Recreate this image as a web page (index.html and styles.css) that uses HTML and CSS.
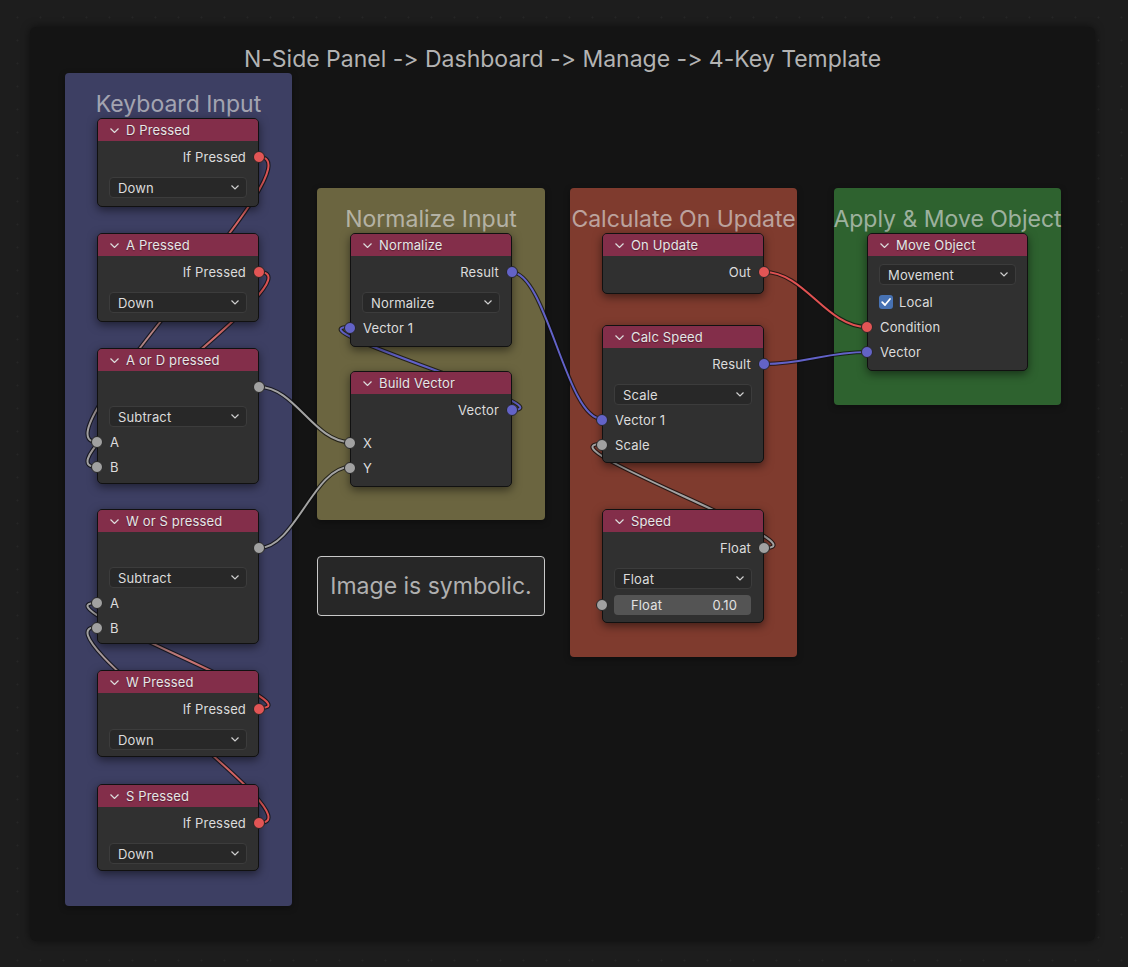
FILE: index.html
```html
<!DOCTYPE html>
<html>
<head>
<meta charset="utf-8">
<link rel="stylesheet" href="styles.css">
</head>
<body>
<div class="panel">
  <h1 class="title">N-Side Panel -&gt; Dashboard -&gt; Manage -&gt; 4-Key Template</h1>

  <div class="frame f-kb"><div class="frame-label">Keyboard Input</div></div>
  <div class="frame f-norm"><div class="frame-label">Normalize Input</div></div>
  <div class="frame f-calc"><div class="frame-label">Calculate On Update</div></div>
  <div class="frame f-apply"><div class="frame-label">Apply &amp; Move Object</div></div>

  <div class="note">Image is symbolic.</div>

  <svg class="links" width="1128" height="967" viewBox="0 0 1128 967">
    <defs>
      <linearGradient id="g1" gradientUnits="userSpaceOnUse" x1="259" y1="157" x2="97" y2="442"><stop offset="0" stop-color="#e05252"/><stop offset="1" stop-color="#a3a3a3"/></linearGradient>
      <linearGradient id="g2" gradientUnits="userSpaceOnUse" x1="259" y1="272" x2="97" y2="467"><stop offset="0" stop-color="#e05252"/><stop offset="1" stop-color="#a3a3a3"/></linearGradient>
      <linearGradient id="g3" gradientUnits="userSpaceOnUse" x1="259" y1="708" x2="97" y2="603"><stop offset="0" stop-color="#e05252"/><stop offset="1" stop-color="#a3a3a3"/></linearGradient>
      <linearGradient id="g4" gradientUnits="userSpaceOnUse" x1="259" y1="823" x2="97" y2="627"><stop offset="0" stop-color="#e05252"/><stop offset="1" stop-color="#a3a3a3"/></linearGradient>
    </defs>
    <g class="outline">
      <path d="M259 157 C324 157, 32 442, 97 442"/>
      <path d="M259 272 C324 272, 32 467, 97 467"/>
      <path d="M259 708 C324 708, 32 603, 97 603"/>
      <path d="M259 823 C324 823, 32 627, 97 627"/>
      <path d="M259 387 C295 387, 314 442, 350 442"/>
      <path d="M259 548 C295 548, 314 467, 350 467"/>
      <path d="M511 410 C575 410, 286 327, 350 327"/>
      <path d="M511 272 C547 272, 566 419, 602 419"/>
      <path d="M764 548 C829 548, 537 444, 602 444"/>
      <path d="M764 272 C805 272, 826 327, 867 327"/>
      <path d="M764 364 C805 364, 826 352, 867 352"/>
    </g>
    <g class="core">
      <path stroke="url(#g1)" d="M259 157 C324 157, 32 442, 97 442"/>
      <path stroke="url(#g2)" d="M259 272 C324 272, 32 467, 97 467"/>
      <path stroke="url(#g3)" d="M259 708 C324 708, 32 603, 97 603"/>
      <path stroke="url(#g4)" d="M259 823 C324 823, 32 627, 97 627"/>
      <path class="grey" d="M259 387 C295 387, 314 442, 350 442"/>
      <path class="grey" d="M259 548 C295 548, 314 467, 350 467"/>
      <path class="blue" d="M511 410 C575 410, 286 327, 350 327"/>
      <path class="blue" d="M511 272 C547 272, 566 419, 602 419"/>
      <path class="grey" d="M764 548 C829 548, 537 444, 602 444"/>
      <path class="red" d="M764 272 C805 272, 826 327, 867 327"/>
      <path class="blue" d="M764 364 C805 364, 826 352, 867 352"/>
    </g>
  </svg>

  <!-- Keyboard input nodes -->
  <div class="node n-d">
    <div class="node-head"><svg class="chev" viewBox="0 0 9 5"><path d="M0.5 0.5 L4.5 4.5 L8.5 0.5"/></svg>D Pressed</div>
    <div class="node-body">
      <div class="row out">If Pressed<span class="sock red"></span></div>
      <div class="select"><span>Down</span><svg viewBox="0 0 8 5"><path d="M0.5 0.5 L4 4 L7.5 0.5"/></svg></div>
    </div>
  </div>
  <div class="node n-a">
    <div class="node-head"><svg class="chev" viewBox="0 0 9 5"><path d="M0.5 0.5 L4.5 4.5 L8.5 0.5"/></svg>A Pressed</div>
    <div class="node-body">
      <div class="row out">If Pressed<span class="sock red"></span></div>
      <div class="select"><span>Down</span><svg viewBox="0 0 8 5"><path d="M0.5 0.5 L4 4 L7.5 0.5"/></svg></div>
    </div>
  </div>
  <div class="node n-aord">
    <div class="node-head"><svg class="chev" viewBox="0 0 9 5"><path d="M0.5 0.5 L4.5 4.5 L8.5 0.5"/></svg>A or D pressed</div>
    <div class="node-body">
      <div class="row out"><span class="sock grey"></span></div>
      <div class="select tight"><span>Subtract</span><svg viewBox="0 0 8 5"><path d="M0.5 0.5 L4 4 L7.5 0.5"/></svg></div>
      <div class="row in"><span class="sock grey"></span>A</div>
      <div class="row in"><span class="sock grey"></span>B</div>
    </div>
  </div>
  <div class="node n-wors">
    <div class="node-head"><svg class="chev" viewBox="0 0 9 5"><path d="M0.5 0.5 L4.5 4.5 L8.5 0.5"/></svg>W or S pressed</div>
    <div class="node-body">
      <div class="row out"><span class="sock grey"></span></div>
      <div class="select tight"><span>Subtract</span><svg viewBox="0 0 8 5"><path d="M0.5 0.5 L4 4 L7.5 0.5"/></svg></div>
      <div class="row in"><span class="sock grey"></span>A</div>
      <div class="row in"><span class="sock grey"></span>B</div>
    </div>
  </div>
  <div class="node n-w">
    <div class="node-head"><svg class="chev" viewBox="0 0 9 5"><path d="M0.5 0.5 L4.5 4.5 L8.5 0.5"/></svg>W Pressed</div>
    <div class="node-body">
      <div class="row out">If Pressed<span class="sock red"></span></div>
      <div class="select"><span>Down</span><svg viewBox="0 0 8 5"><path d="M0.5 0.5 L4 4 L7.5 0.5"/></svg></div>
    </div>
  </div>
  <div class="node n-s">
    <div class="node-head"><svg class="chev" viewBox="0 0 9 5"><path d="M0.5 0.5 L4.5 4.5 L8.5 0.5"/></svg>S Pressed</div>
    <div class="node-body">
      <div class="row out">If Pressed<span class="sock red"></span></div>
      <div class="select"><span>Down</span><svg viewBox="0 0 8 5"><path d="M0.5 0.5 L4 4 L7.5 0.5"/></svg></div>
    </div>
  </div>

  <!-- Normalize input -->
  <div class="node n-normalize">
    <div class="node-head"><svg class="chev" viewBox="0 0 9 5"><path d="M0.5 0.5 L4.5 4.5 L8.5 0.5"/></svg>Normalize</div>
    <div class="node-body">
      <div class="row out">Result<span class="sock blue"></span></div>
      <div class="select"><span>Normalize</span><svg viewBox="0 0 8 5"><path d="M0.5 0.5 L4 4 L7.5 0.5"/></svg></div>
      <div class="row in"><span class="sock blue"></span>Vector 1</div>
    </div>
  </div>
  <div class="node n-build">
    <div class="node-head"><svg class="chev" viewBox="0 0 9 5"><path d="M0.5 0.5 L4.5 4.5 L8.5 0.5"/></svg>Build Vector</div>
    <div class="node-body">
      <div class="row out">Vector<span class="sock blue"></span></div>
      <div class="row in gap-top"><span class="sock grey"></span>X</div>
      <div class="row in"><span class="sock grey"></span>Y</div>
    </div>
  </div>

  <!-- Calculate on update -->
  <div class="node n-update">
    <div class="node-head"><svg class="chev" viewBox="0 0 9 5"><path d="M0.5 0.5 L4.5 4.5 L8.5 0.5"/></svg>On Update</div>
    <div class="node-body">
      <div class="row out">Out<span class="sock red"></span></div>
    </div>
  </div>
  <div class="node n-calc">
    <div class="node-head"><svg class="chev" viewBox="0 0 9 5"><path d="M0.5 0.5 L4.5 4.5 L8.5 0.5"/></svg>Calc Speed</div>
    <div class="node-body">
      <div class="row out">Result<span class="sock blue"></span></div>
      <div class="select"><span>Scale</span><svg viewBox="0 0 8 5"><path d="M0.5 0.5 L4 4 L7.5 0.5"/></svg></div>
      <div class="row in"><span class="sock blue"></span>Vector 1</div>
      <div class="row in"><span class="sock grey"></span>Scale</div>
    </div>
  </div>
  <div class="node n-speed">
    <div class="node-head"><svg class="chev" viewBox="0 0 9 5"><path d="M0.5 0.5 L4.5 4.5 L8.5 0.5"/></svg>Speed</div>
    <div class="node-body">
      <div class="row out">Float<span class="sock grey"></span></div>
      <div class="select"><span>Float</span><svg viewBox="0 0 8 5"><path d="M0.5 0.5 L4 4 L7.5 0.5"/></svg></div>
      <div class="field"><span class="sock grey"></span><span>Float</span><span>0.10</span></div>
    </div>
  </div>

  <!-- Apply -->
  <div class="node n-move">
    <div class="node-head"><svg class="chev" viewBox="0 0 9 5"><path d="M0.5 0.5 L4.5 4.5 L8.5 0.5"/></svg>Move Object</div>
    <div class="node-body">
      <div class="select first"><span>Movement</span><svg viewBox="0 0 8 5"><path d="M0.5 0.5 L4 4 L7.5 0.5"/></svg></div>
      <div class="check-row"><span class="checkbox"><svg viewBox="0 0 14 14"><path d="M3.2 7.2 L6 10 L11 4"/></svg></span>Local</div>
      <div class="row in"><span class="sock red"></span>Condition</div>
      <div class="row in"><span class="sock blue"></span>Vector</div>
    </div>
  </div>
</div>
</body>
</html>
```

FILE: styles.css
```css
html, body {
  margin: 0;
  padding: 0;
}
body {
  width: 1128px;
  height: 967px;
  background-color: #1d1d1d;
  background-image: radial-gradient(circle, #262626 0.8px, transparent 1.2px);
  background-size: 23px 23px;
  background-position: 6px 6px;
  font-family: Inter, "Noto Sans", "DejaVu Sans", sans-serif;
  font-feature-settings: "calt" 0, "liga" 0;
  font-variant-ligatures: none;
  overflow: hidden;
  display: flex;
  padding: 27px 33px 26px 30px;
  box-sizing: border-box;
}
.panel {
  position: relative;
  flex: 1;
  background: #141414;
  border-radius: 6px;
  box-shadow: 0 0 8px rgba(0, 0, 0, 0.55);
}
.title {
  margin: 0;
  padding-top: 18px;
  font-weight: 400;
  font-size: 23px;
  line-height: 28px;
  text-align: center;
  color: #b3b3b3;
  font-feature-settings: "calt" 0, "liga" 0;
}

/* frames */
.frame {
  position: absolute;
  border-radius: 4px;
  box-shadow: 0 2px 6px rgba(0, 0, 0, 0.35);
}
.frame-label {
  padding-top: 17px;
  font-size: 23px;
  line-height: 28px;
  text-align: center;
  color: rgba(225, 225, 225, 0.64);
  white-space: nowrap;
}
.f-kb { left: 35px; top: 46px; width: 227px; height: 833px; background: #3d3f63; }
.f-norm { left: 287px; top: 161px; width: 228px; height: 332px; background: #6b6540; }
.f-calc { left: 540px; top: 161px; width: 227px; height: 469px; background: #7f3b2e; }
.f-apply { left: 804px; top: 161px; width: 227px; height: 217px; background: #2e622f; }
.f-calc .frame-label, .f-apply .frame-label { margin: 0 -6px; }

.note {
  position: absolute;
  left: 287px;
  top: 529px;
  width: 228px;
  height: 60px;
  box-sizing: border-box;
  border: 1px solid #c9c9c9;
  border-radius: 4px;
  background: #272727;
  color: #b0b0b0;
  font-size: 23px;
  display: flex;
  align-items: center;
  justify-content: center;
}

/* links */
.links {
  position: absolute;
  left: -30px;
  top: -27px;
  pointer-events: none;
}
.links path {
  fill: none;
}
.links .outline path {
  stroke: #0e0e0e;
  stroke-width: 4.2;
  stroke-opacity: 0.75;
}
.links .core path {
  stroke-width: 2;
}
.links .core .grey { stroke: #a3a3a3; }
.links .core .blue { stroke: #6262c8; }
.links .core .red { stroke: #e05252; }

/* nodes */
.node {
  position: absolute;
  width: 162px;
  box-sizing: border-box;
  background: #303030;
  border: 1px solid #111;
  border-radius: 5px;
  box-shadow: 0 3px 10px rgba(0, 0, 0, 0.5);
  color: #dcdcdc;
  font-size: 13px;
  letter-spacing: 0.15px;
}
.node-head {
  height: 22px;
  background: #832e4a;
  border-radius: 4px 4px 0 0;
  display: flex;
  align-items: center;
  gap: 7px;
  padding-left: 12px;
  color: #e6e6e6;
  text-shadow: 0 1px 1px rgba(0, 0, 0, 0.35);
}
.chev {
  width: 9px;
  height: 5px;
  margin-top: 1px;
  fill: none;
  stroke: #dcdcdc;
  stroke-width: 1.2;
}
.node-body {
  padding-top: 4px;
}
.row {
  position: relative;
  height: 24px;
  display: flex;
  align-items: center;
  padding: 0 12px;
  white-space: nowrap;
}
.row.out {
  justify-content: flex-end;
}
.row.in {
  height: 25px;
}
.row.gap-top {
  margin-top: 8px;
}
.sock {
  position: absolute;
  top: 50%;
  margin-top: -6px;
  width: 10px;
  height: 10px;
  border-radius: 50%;
  border: 1px solid #262626;
}
.out .sock { right: -7px; }
.in .sock { left: -7px; }
.sock.grey { background: #a1a1a1; }
.sock.red { background: #e25555; }
.sock.blue { background: #6363c7; }

.select {
  margin: 8px 11px 2px;
  height: 21px;
  box-sizing: border-box;
  background: #282828;
  border: 1px solid #3c3c3c;
  border-radius: 4px;
  display: flex;
  align-items: center;
  justify-content: space-between;
  padding: 0 7px 0 8px;
  color: #dcdcdc;
}
.select.tight { margin-top: 7px; }
.select.first { margin-top: 4px; }
.select svg {
  width: 8px;
  height: 5px;
  fill: none;
  stroke: #d0d0d0;
  stroke-width: 1.2;
}

.field {
  position: relative;
  margin: 6px 12px 0 11px;
  height: 20px;
  background: #545454;
  border-radius: 4px;
  display: flex;
  align-items: center;
  justify-content: space-between;
  padding: 0 14px 0 17px;
  color: #e2e2e2;
}
.field .sock {
  left: -18px;
}

.check-row {
  height: 24px;
  margin-top: 5px;
  display: flex;
  align-items: center;
  gap: 6px;
  padding-left: 11px;
}
.checkbox {
  width: 14px;
  height: 14px;
  border-radius: 3px;
  background: #4772b3;
  display: flex;
}
.checkbox svg {
  width: 14px;
  height: 14px;
  fill: none;
  stroke: #fff;
  stroke-width: 1.8;
  stroke-linecap: round;
  stroke-linejoin: round;
}

/* node placement on the canvas (page coords minus 30,27) */
.n-d { left: 67px; top: 91px; height: 89px; }
.n-a { left: 67px; top: 206px; height: 89px; }
.n-aord { left: 67px; top: 321px; height: 136px; }
.n-wors { left: 67px; top: 482px; height: 135px; }
.n-w { left: 67px; top: 643px; height: 87px; }
.n-s { left: 67px; top: 757px; height: 87px; }
.n-normalize { left: 320px; top: 206px; height: 114px; }
.n-build { left: 320px; top: 344px; height: 116px; }
.n-update { left: 572px; top: 206px; height: 61px; }
.n-calc { left: 572px; top: 298px; height: 138px; }
.n-speed { left: 572px; top: 482px; height: 114px; }
.n-move { left: 837px; top: 206px; height: 138px; width: 161px; }
```
